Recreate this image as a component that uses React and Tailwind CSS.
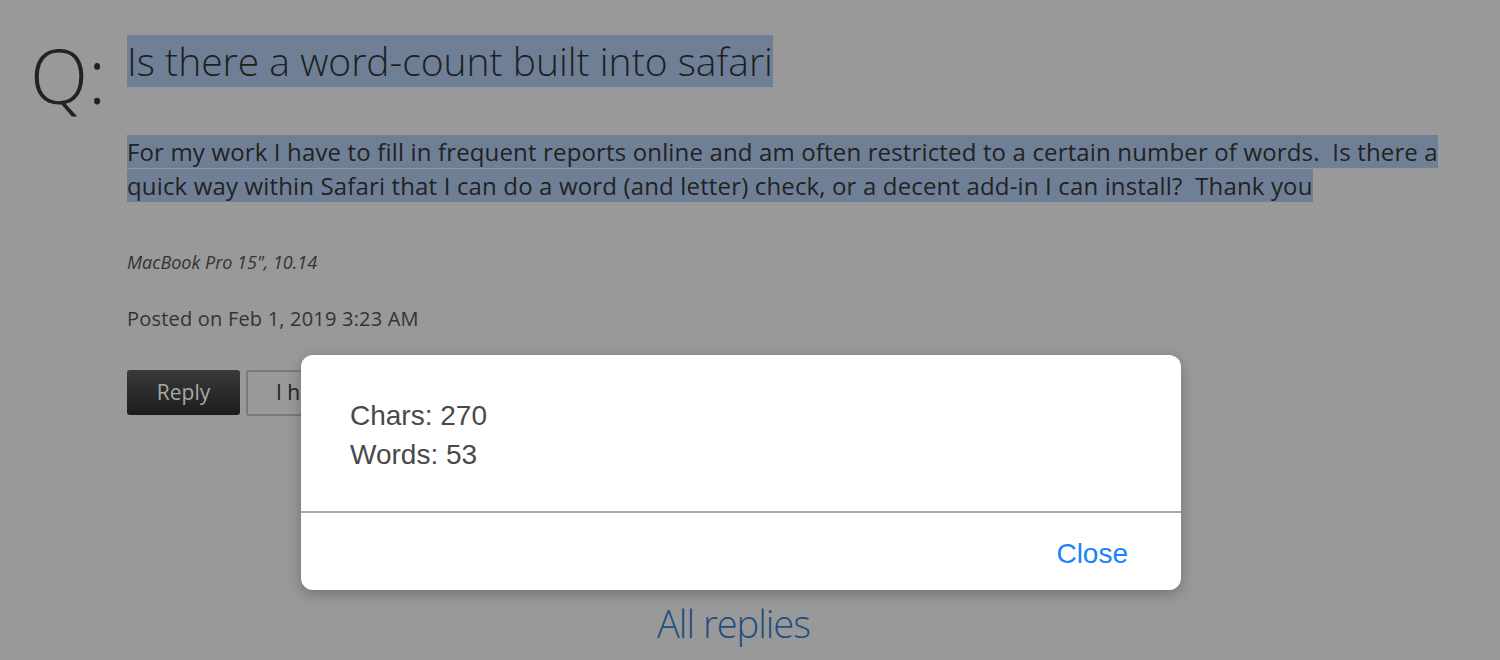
export default function App() {
  return (
    <div className="relative h-[660px] w-[1500px] overflow-hidden bg-[#999999] font-['Open_Sans',sans-serif]">
      <div className="flex pl-[30px] pt-[35px]">
        <div className="w-[97px] shrink-0 text-[76px] font-light leading-[80px] text-[#222]">Q:</div>
        <div className="flex flex-col">
          <h1 className="self-start bg-[#6f8096] text-[39px] font-light leading-[52px] text-[#1f1f1f]">
            Is there a word-count built into safari
          </h1>
          <p className="mt-[48px] w-[1340px] text-[24px] leading-[34px] tracking-[0.15px] text-[#222]">
            <span className="bg-[#6f8096] [box-decoration-break:clone]">
              For my work I have to fill in frequent reports online and am often restricted to a certain number of words.&nbsp; Is there a quick way within Safari that I can do a word (and letter) check, or a decent add-in I can install?&nbsp; Thank you
            </span>
          </p>
          <p className="mt-[46px] text-[18px] italic text-[#333]">MacBook Pro 15", 10.14</p>
          <p className="mt-[28px] text-[20px] tracking-[0.2px] text-[#333]">Posted on Feb 1, 2019 3:23 AM</p>
          <div className="mt-[36px] flex gap-[6px]">
            <button className="h-[45px] w-[113px] rounded-[3px] bg-gradient-to-b from-[#3a3a3a] to-[#1c1c1c] text-[21px] text-[#a8a8a8]">Reply</button>
            <button className="h-[46px] w-[160px] whitespace-nowrap rounded-[3px] border-2 border-[#7a7a7a] pl-[28px] text-left text-[21px] text-[#222]">I have this question too</button>
          </div>
          <div className="mt-[179px] pl-[530px] text-[38px] font-light tracking-[-1px] text-[#1f4f80]">All replies</div>
        </div>
      </div>

      <div className="absolute left-[301px] top-[355px] w-[880px] overflow-hidden rounded-[12px] bg-white font-['Liberation_Sans',Arial,sans-serif] shadow-[0_4px_14px_rgba(0,0,0,0.25)]">
        <div className="h-[156px] pl-[49px] pt-[41px] text-[28px] leading-[39px] text-[#4a4a4a]">
          <div>Chars: 270</div>
          <div>Words: 53</div>
        </div>
        <div className="h-[2px] bg-[#a9a9a9]" />
        <div className="flex h-[77px] items-center justify-end pr-[53px] pt-[4px]">
          <button className="text-[28px] text-[#1a82fb]">Close</button>
        </div>
      </div>
    </div>
  )
}
